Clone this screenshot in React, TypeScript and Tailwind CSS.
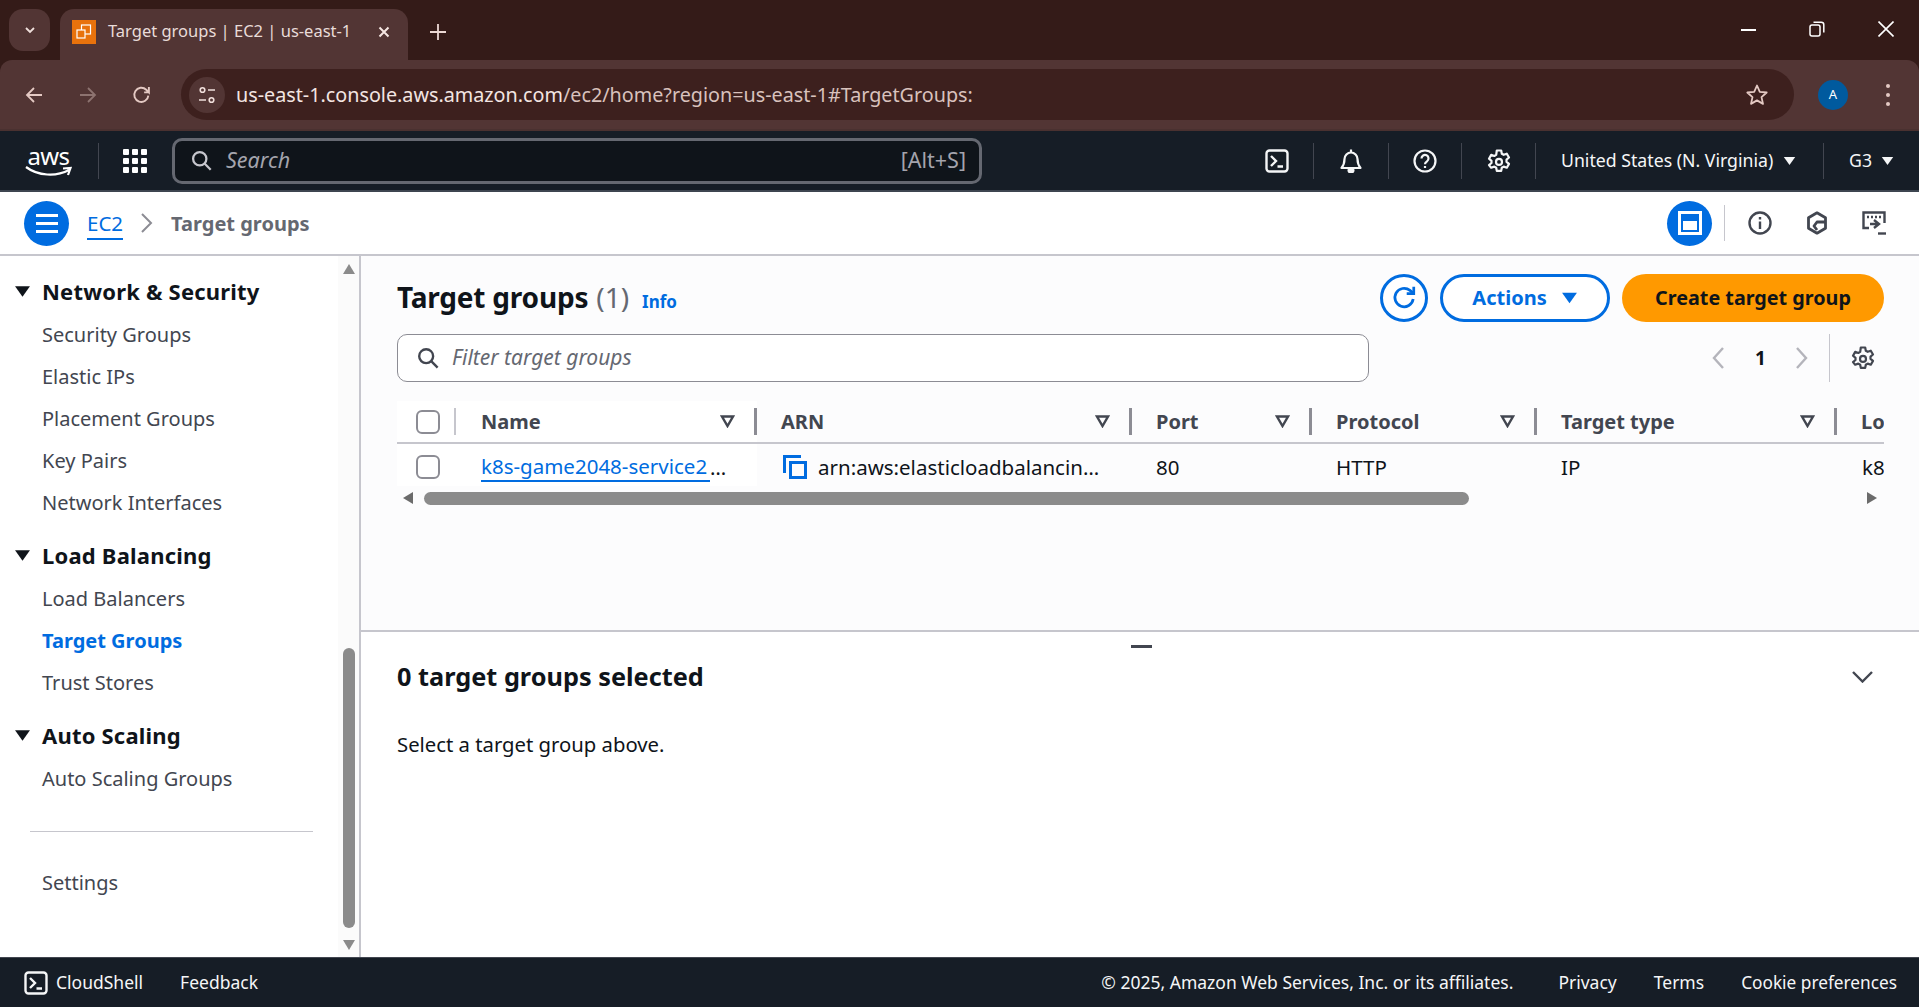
function Tri({ className }: { className: string }) {
  return (
    <svg className={className} viewBox="0 0 16 12" fill="currentColor">
      <path d="M1 1h14L8 11z" />
    </svg>
  );
}

function CloudShellIcon({ className }: { className: string }) {
  return (
    <svg className={className} viewBox="0 0 24 24" fill="none" stroke="currentColor" strokeWidth="2.4">
      <rect x="1.5" y="1.5" width="21" height="21" rx="3" />
      <path d="M6 7l5 5-5 5M12.5 17.5h5.5" />
    </svg>
  );
}

function GearIcon({ className }: { className: string }) {
  return (
    <svg className={className} viewBox="0 0 24 24" fill="none" stroke="currentColor" strokeWidth="2.2" strokeLinejoin="round">
      <path d="M9.8 1.5h4.4l.6 3.2 1.9 1.1 3.1-1.1 2.2 3.8-2.5 2.1v2.2l2.5 2.1-2.2 3.8-3.1-1.1-1.9 1.1-.6 3.2H9.8l-.6-3.2-1.9-1.1-3.1 1.1L2 16.1l2.5-2.1v-2.2L2 9.7l2.2-3.8 3.1 1.1 1.9-1.1z" />
      <circle cx="12" cy="12.9" r="3" />
    </svg>
  );
}

function SearchIcon({ className }: { className: string }) {
  return (
    <svg className={className} viewBox="0 0 24 24" fill="none" stroke="currentColor" strokeWidth="2.6">
      <circle cx="10" cy="10" r="7.6" />
      <path d="M15.5 15.5l7 7" />
    </svg>
  );
}

function Sep({ className }: { className: string }) {
  return <div className={`w-px shrink-0 ${className}`} />;
}

function TabBar() {
  return (
    <div className="h-[60px] bg-[#341b18] flex items-end shrink-0">
      <div className="ml-[9px] mb-[9px] w-[41px] h-[42px] rounded-[14px] bg-[#523534] flex items-center justify-center">
        <svg className="w-3 h-3 text-[#f0e0dc]" viewBox="0 0 12 12" fill="none" stroke="currentColor" strokeWidth="1.8">
          <path d="M2 4l4 4 4-4" />
        </svg>
      </div>
      <div className="ml-[10px] w-[348px] h-[51px] bg-[#523534] rounded-t-[14px] flex items-center pl-3 pb-[6px]">
        <svg className="w-6 h-6 shrink-0" viewBox="0 0 24 24">
          <rect width="24" height="24" fill="#e8720c" />
          <g fill="none" stroke="#fff" strokeWidth="1.2">
            <rect x="9.5" y="5" width="9" height="9" />
            <rect x="5" y="10" width="8" height="8" fill="#e8720c" />
          </g>
        </svg>
        <span className="ml-3 text-[16.5px] leading-none text-[#e9dcd9] whitespace-nowrap w-[270px]">Target groups | EC2 | us-east-1</span>
        <svg className="w-3 h-3 text-[#f5e6e2]" viewBox="0 0 12 12" fill="none" stroke="currentColor" strokeWidth="2">
          <path d="M1.5 1.5l9 9M10.5 1.5l-9 9" />
        </svg>
      </div>
      <div className="ml-[22px] mb-[20px] w-[16px] h-[16px]">
        <svg className="w-4 h-4 text-[#ecd9d4]" viewBox="0 0 16 16" fill="none" stroke="currentColor" strokeWidth="1.8">
          <path d="M8 0v16M0 8h16" />
        </svg>
      </div>
      <div className="flex-1" />
      <div className="flex items-center self-start mt-[21px] text-white mr-[25px]">
        <div className="w-[15px] h-[2px] bg-white mt-[1px]" />
        <svg className="ml-[53px] w-4 h-4" viewBox="0 0 16 16" fill="none" stroke="currentColor" strokeWidth="1.5">
          <rect x="1" y="4" width="10" height="11" rx="2" />
          <path d="M4.5 1.2h7.8a2.5 2.5 0 0 1 2.5 2.5v7.8" />
        </svg>
        <svg className="ml-[53px] w-4 h-4" viewBox="0 0 16 16" fill="none" stroke="currentColor" strokeWidth="1.6">
          <path d="M.5.5l15 15M15.5.5l-15 15" />
        </svg>
      </div>
    </div>
  );
}

function AddressBar() {
  return (
    <div className="h-[71px] bg-[#523534] rounded-t-[12px] flex items-center shrink-0 border-b-2 border-[#4a3130] text-[#e4c9c3]">
      <svg className="ml-[25px] w-[18px] h-[18px]" viewBox="0 0 18 18" fill="none" stroke="currentColor" strokeWidth="1.8">
        <path d="M17 9H2M9 2L2 9l7 7" />
      </svg>
      <svg className="ml-[36px] w-[18px] h-[18px] text-[#8d7370]" viewBox="0 0 18 18" fill="none" stroke="currentColor" strokeWidth="1.8">
        <path d="M1 9h15M9 2l7 7-7 7" />
      </svg>
      <svg className="ml-[35px] w-[19px] h-[19px]" viewBox="0 0 18 18" fill="none" stroke="currentColor" strokeWidth="1.8">
        <path d="M15.5 10a6.7 6.7 0 1 1-2-5.5L16 7V2M16 7h-4.5" />
      </svg>
      <div className="ml-[30px] w-[1613px] h-[51px] rounded-full bg-[#3d201e] flex items-center pl-2 pr-[25px]">
        <div className="w-[36px] h-[36px] rounded-full bg-[#523534] flex items-center justify-center">
          <svg className="w-5 h-5 text-[#f0dfdb]" viewBox="0 0 20 20" fill="none" stroke="currentColor" strokeWidth="1.6">
            <circle cx="5.5" cy="5" r="2.3" />
            <path d="M11 5h7M2 15h7" />
            <circle cx="14.5" cy="15" r="2.3" />
          </svg>
        </div>
        <span className="ml-[11px] text-[19.75px] text-[#f3e5e2] flex-1 whitespace-nowrap">
          us-east-1.console.aws.amazon.com<span className="text-[#d9c2bd]">/ec2/home?region=us-east-1#TargetGroups:</span>
        </span>
        <svg className="w-6 h-6" viewBox="0 0 24 24" fill="none" stroke="currentColor" strokeWidth="1.8" strokeLinejoin="round">
          <path d="M12 2.5l2.8 6.3 6.9.7-5.2 4.6 1.5 6.8L12 17.4l-6 3.500 1.500-6.800-5.200-4.600 6.900-.7z" />
        </svg>
      </div>
      <div className="ml-[24px] w-[30px] h-[30px] rounded-full bg-[#005a9e] flex items-center justify-center text-[13px] text-white">A</div>
      <div className="ml-[38px] flex flex-col gap-[5px]">
        <div className="w-[4px] h-[4px] rounded-full bg-[#e4c9c3]" />
        <div className="w-[4px] h-[4px] rounded-full bg-[#e4c9c3]" />
        <div className="w-[4px] h-[4px] rounded-full bg-[#e4c9c3]" />
      </div>
    </div>
  );
}

function TopNav() {
  return (
    <div className="h-[61px] bg-[#161d26] flex items-center shrink-0 border-b-2 border-[#3d4550] text-[#f5f6f7]">
      <div className="ml-[25px] w-[47px] h-[32px] relative flex flex-col items-center">
        <span className="text-[24px] leading-[22px] font-normal text-white tracking-tight">aws</span>
        <svg className="absolute left-0 bottom-0 w-[47px] h-[12px]" viewBox="0 0 47 12" fill="none" stroke="#fff" strokeWidth="2.2">
          <path d="M1 2c12 9 30 10 43 3M38 3.5l7.5-.5-2.5 7" />
        </svg>
      </div>
      <Sep className="ml-[26px] h-[36px] bg-[#424650]" />
      <div className="ml-[24px] grid grid-cols-3 gap-[3px] w-[24px]">
        {Array.from({ length: 9 }).map((_, i) => (
          <div key={i} className="w-[6px] h-[6px] rounded-[1px] bg-white" />
        ))}
      </div>
      <div className="ml-[25px] w-[810px] h-[46px] bg-[#0f141a] border-[3px] border-[#656871] rounded-[10px] flex items-center pl-4 pr-[13px]">
        <SearchIcon className="w-[21px] h-[21px] text-[#c6c6cd]" />
        <span className="ml-[14px] italic text-[21.5px] text-[#a4a4ad] flex-1">Search</span>
        <span className="text-[21.5px] text-[#a4a4ad]">[Alt+S]</span>
      </div>
      <CloudShellIcon className="ml-[283px] w-6 h-6" />
      <Sep className="ml-[24px] h-[36px] bg-[#424650]" />
      <svg className="ml-[25px] w-6 h-6" viewBox="0 0 24 24" fill="none" stroke="currentColor" strokeWidth="2.2" strokeLinejoin="round">
        <path d="M2.5 19c2-2.5 3-5 3-9a6.5 6.5 0 0 1 13 0c0 4 1 6.5 3 9z" />
        <path d="M9.5 21h5a2.5 2.5 0 0 1-5 0z" fill="currentColor" />
        <path d="M12 .5v3" />
      </svg>
      <Sep className="ml-[25px] h-[36px] bg-[#424650]" />
      <svg className="ml-[24px] w-6 h-6" viewBox="0 0 24 24" fill="none" stroke="currentColor" strokeWidth="2.2">
        <circle cx="12" cy="12" r="10.5" />
        <path d="M8.5 9.5a3.5 3.5 0 1 1 5.5 2.8c-1.3.9-2 1.500-2 3" />
        <path d="M12 17v2" />
      </svg>
      <Sep className="ml-[24px] h-[36px] bg-[#424650]" />
      <GearIcon className="ml-[25px] w-6 h-6" />
      <Sep className="ml-[24px] h-[36px] bg-[#424650]" />
      <span className="ml-[25px] text-[17.7px] whitespace-nowrap w-[212px]">United States (N. Virginia)</span>
      <Tri className="ml-[10px] w-[13px] h-[10px]" />
      <Sep className="ml-[27px] h-[36px] bg-[#424650]" />
      <span className="ml-[25px] text-[17.7px]">G3</span>
      <Tri className="ml-[9px] w-[13px] h-[10px]" />
    </div>
  );
}

function Breadcrumbs() {
  return (
    <div className="h-[64px] bg-white border-b-2 border-[#c6c6cd] flex items-center shrink-0">
      <div className="ml-6 w-[45px] h-[45px] rounded-full bg-[#006ce0] flex flex-col items-center justify-center gap-[5px]">
        <div className="w-[22px] h-[3px] bg-white" />
        <div className="w-[22px] h-[3px] bg-white" />
        <div className="w-[22px] h-[3px] bg-white" />
      </div>
      <span className="ml-[18px] mt-px text-[20.5px] leading-[30px] text-[#006ce0] border-b-2 border-[#006ce0]">EC2</span>
      <svg className="ml-[17px] w-[14px] h-[20px] text-[#8c8c94]" viewBox="0 0 14 20" fill="none" stroke="currentColor" strokeWidth="2">
        <path d="M2 1l9 9-9 9" />
      </svg>
      <span className="ml-[17px] mt-px text-[20px] font-bold text-[#656871]">Target groups</span>
      <div className="flex-1" />
      <div className="w-[45px] h-[45px] rounded-full bg-[#006ce0] flex items-center justify-center">
        <div className="w-[24px] h-[24px] border-[3px] border-white flex items-end p-[2px]">
          <div className="w-full h-[9px] bg-white" />
        </div>
      </div>
      <Sep className="ml-[12px] h-[36px] bg-[#c6c6cd]" />
      <svg className="ml-[23px] w-6 h-6 text-[#424650]" viewBox="0 0 24 24" fill="none" stroke="currentColor" strokeWidth="2.4">
        <circle cx="12" cy="12" r="10.5" />
        <path d="M12 10.5V18M12 6v2.5" />
      </svg>
      <svg className="ml-[33px] w-6 h-6 text-[#424650]" viewBox="0 0 24 24" fill="none" stroke="currentColor" strokeWidth="2.8" strokeLinejoin="round">
        <path d="M12 1.8l8.5 5v10.400L12 22.200l-8.500-5V6.800z" />
        <path d="M20 11h-8l-3 4 3 4" />
      </svg>
      <svg className="ml-[33px] mr-[33px] w-6 h-6 text-[#424650]" viewBox="0 0 24 24" fill="none" stroke="currentColor" strokeWidth="2.4">
        <path d="M7 17H1.5V1.5h21V12" />
        <path d="M5 6h2M9 6h2M13 6h2M17 6h2" />
        <path d="M8 13h8M12 9l5 4-5 4" />
        <path d="M16 22.5h8" />
      </svg>
    </div>
  );
}

function NavGroup({ title, items, active }: { title: string; items: string[]; active?: string }) {
  return (
    <div className="mb-[11px]">
      <div className="h-[42px] mb-px pb-px flex items-center">
        <Tri className="ml-[14px] w-[17px] h-[13px] text-[#0f141a]" />
        <span className="ml-[11px] text-[22px] font-bold text-[#0f141a] tracking-[0.2px]">{title}</span>
      </div>
      {items.map(item => (
        <div
          key={item}
          className={`ml-[42px] h-[42px] flex items-center text-[20px] ${
            item === active ? "font-bold text-[#006ce0]" : "text-[#424650]"
          }`}
        >
          {item}
        </div>
      ))}
    </div>
  );
}

function Sidebar() {
  return (
    <div className="w-[361px] shrink-0 bg-white border-r-2 border-[#c6c6cd] flex">
      <div className="w-[338px] pt-[15px]">
        <NavGroup
          title="Network & Security"
          items={["Security Groups", "Elastic IPs", "Placement Groups", "Key Pairs", "Network Interfaces"]}
        />
        <NavGroup title="Load Balancing" items={["Load Balancers", "Target Groups", "Trust Stores"]} active="Target Groups" />
        <NavGroup title="Auto Scaling" items={["Auto Scaling Groups"]} />
        <div className="ml-[30px] mt-[31px] w-[283px] h-px bg-[#c6c6cd]" />
        <div className="ml-[42px] mt-[36px] text-[20px] text-[#424650]">Settings</div>
      </div>
      <div className="w-[21px] bg-[#fbfbfb] flex flex-col items-center pt-[7px] pb-[6px]">
        <svg className="w-[14px] h-[12px] text-[#8b8b8b]" viewBox="0 0 14 12" fill="currentColor">
          <path d="M7 1l6 10H1z" />
        </svg>
        <div className="flex-1" />
        <div className="w-[12px] h-[280px] rounded-full bg-[#8b8b8b]" />
        <svg className="mt-[11px] w-[14px] h-[12px] text-[#8b8b8b]" viewBox="0 0 14 12" fill="currentColor">
          <path d="M1 1h12L7 11z" />
        </svg>
      </div>
    </div>
  );
}

function HeaderCell({ label, width, first }: { label: string; width: string; first?: boolean }) {
  return (
    <div className={`flex items-center shrink-0 h-full ${width} ${first ? "bg-white" : ""}`}>
      <span className="ml-[24px] mt-px text-[20px] font-bold text-[#424650]">{label}</span>
      <div className="flex-1" />
      <svg className="w-[15px] h-[13px] text-[#424650] mr-[19px]" viewBox="0 0 15 13" fill="none" stroke="currentColor" strokeWidth="2.4">
        <path d="M2 1.5h11L7.5 11z" />
      </svg>
      <div className="w-[3px] h-[27px] bg-[#8c8c94]" />
    </div>
  );
}

function Checkbox() {
  return <div className="ml-[19px] w-[24px] h-[24px] rounded-[6px] border-2 border-[#8c8c94] bg-white" />;
}

function TableSection() {
  return (
    <div className="mt-[19px] mr-[35px] overflow-hidden">
      <div className="h-[43px] flex items-center border-b-2 border-[#c6c6cd] whitespace-nowrap">
        <div className="w-[60px] h-full bg-white flex items-center shrink-0">
          <Checkbox />
          <div className="ml-[14px] w-[2px] h-[27px] bg-[#c6c6cd]" />
        </div>
        <HeaderCell label="Name" width="w-[300px]" first />
        <HeaderCell label="ARN" width="w-[375px]" />
        <HeaderCell label="Port" width="w-[180px]" />
        <HeaderCell label="Protocol" width="w-[225px]" />
        <HeaderCell label="Target type" width="w-[300px]" />
        <span className="ml-[24px] mt-px text-[20px] font-bold text-[#424650]">Lo</span>
      </div>
      <div className="h-[42px] flex items-center whitespace-nowrap text-[20.5px] text-[#0f141a]">
        <div className="w-[360px] h-full bg-white flex items-center shrink-0 pt-[4px]">
          <Checkbox />
          <span className="ml-[41px] text-[#006ce0] w-[229px] overflow-hidden border-b-2 border-[#006ce0] leading-[27px]">k8s-game2048-service2</span>
          <span className="text-[#0f141a] tracking-[3px]">…</span>
        </div>
        <div className="w-[374px] shrink-0 flex items-center pt-[4px]">
          <svg className="ml-[26px] w-6 h-6 text-[#006ce0]" viewBox="0 0 24 24" fill="none" stroke="currentColor" strokeWidth="3">
            <path d="M1.5 18V1.5H18" />
            <rect x="7.5" y="7.5" width="15" height="15" />
          </svg>
          <span className="ml-[11px]">arn:aws:elasticloadbalancin…</span>
        </div>
        <div className="w-[180px] shrink-0 pl-[25px] pt-[4px]">80</div>
        <div className="w-[225px] shrink-0 pl-[25px] pt-[4px]">HTTP</div>
        <div className="w-[301px] shrink-0 pl-[25px] pt-[4px]">IP</div>
        <div className="pl-[25px] pt-[4px]">k8</div>
      </div>
      <div className="h-[14px] mt-[5px] flex items-center">
        <svg className="ml-[5px] w-[12px] h-[14px] text-[#6b6b6b]" viewBox="0 0 12 14" fill="currentColor">
          <path d="M11 1v12L1 7z" />
        </svg>
        <div className="ml-[10px] w-[1045px] h-[13px] rounded-full bg-[#8b8b8b]" />
        <div className="flex-1" />
        <svg className="mr-[6px] w-[12px] h-[14px] text-[#6b6b6b]" viewBox="0 0 12 14" fill="currentColor">
          <path d="M1 1v12l10-6z" />
        </svg>
      </div>
    </div>
  );
}

function MainPanel() {
  return (
    <div className="flex-1 flex flex-col min-w-0 bg-white">
      <div className="h-[376px] bg-[#fcfcfd] border-b-2 border-[#c6c6cd] pl-[36px] pt-[18px]">
        <div className="flex items-center mr-[35px] h-[48px]">
          <span className="text-[28px] font-bold text-[#0f141a] tracking-[-0.2px] mb-[2px]">Target groups</span>
          <span className="ml-2 text-[28px] text-[#656871] mb-[2px]">(1)</span>
          <span className="ml-[13px] mt-[8px] text-[17px] font-bold text-[#006ce0]">Info</span>
          <div className="flex-1" />
          <div className="w-[48px] h-[48px] rounded-full border-[3px] border-[#006ce0] bg-white flex items-center justify-center">
            <svg className="w-[26px] h-[26px] text-[#006ce0]" viewBox="0 0 24 24" fill="none" stroke="currentColor" strokeWidth="2.5">
              <path d="M20.5 13a8.5 8.5 0 1 1-3-8l3 2.5" />
              <path d="M21 1.5V8h-6.5" />
            </svg>
          </div>
          <div className="ml-[12px] w-[170px] h-[48px] rounded-full border-[3px] border-[#006ce0] bg-white flex items-center justify-center">
            <span className="text-[20px] font-bold text-[#006ce0]">Actions</span>
            <Tri className="ml-[14px] w-[17px] h-[14px] text-[#006ce0]" />
          </div>
          <div className="ml-[12px] w-[262px] h-[48px] rounded-full bg-[#ff9900] flex items-center justify-center">
            <span className="text-[19.75px] font-bold text-[#0f141a]">Create target group</span>
          </div>
        </div>
        <div className="mt-[12px] mr-[35px] flex items-center h-[48px]">
          <div className="w-[972px] h-full bg-white rounded-[10px] border border-[#8c8c94] flex items-center pl-[19px]">
            <SearchIcon className="w-[22px] h-[22px] text-[#424650]" />
            <span className="ml-[13px] italic text-[21px] text-[#656871]">Filter target groups</span>
          </div>
          <svg className="ml-[342px] w-[14px] h-[24px] text-[#b4b4bb]" viewBox="0 0 14 24" fill="none" stroke="currentColor" strokeWidth="2.4">
            <path d="M12 2L3 12l9 10" />
          </svg>
          <span className="ml-[30px] text-[19px] font-bold text-[#0f141a]">1</span>
          <svg className="ml-[29px] w-[14px] h-[24px] text-[#b4b4bb]" viewBox="0 0 14 24" fill="none" stroke="currentColor" strokeWidth="2.4">
            <path d="M2 2l9 10-9 10" />
          </svg>
          <Sep className="ml-[20px] h-full bg-[#c6c6cd]" />
          <GearIcon className="ml-[21px] w-6 h-6 text-[#424650]" />
        </div>
        <TableSection />
      </div>
      <div className="flex-1 pl-[36px] relative">
        <div className="absolute left-[770px] top-[13px] w-[21px] h-[3px] bg-[#424650]" />
        <div className="mt-[27px] mr-[46px] h-[36px] flex items-center justify-between">
          <span className="text-[25.3px] font-bold text-[#0f141a]">0 target groups selected</span>
          <svg className="w-[21px] h-[12px] text-[#424650]" viewBox="0 0 21 12" fill="none" stroke="currentColor" strokeWidth="2.4">
            <path d="M1 1l9.5 9.5L20 1" />
          </svg>
        </div>
        <div className="mt-[34px] text-[20.3px] text-[#0f141a]">Select a target group above.</div>
      </div>
    </div>
  );
}

function Footer() {
  return (
    <div className="h-[50px] bg-[#161d26] border-t border-[#424650] flex items-center shrink-0 text-[17.5px] text-[#f5f6f7] whitespace-nowrap">
      <CloudShellIcon className="ml-[24px] w-6 h-6" />
      <span className="ml-[8px]">CloudShell</span>
      <span className="ml-[37px]">Feedback</span>
      <div className="flex-1" />
      <span>© 2025, Amazon Web Services, Inc. or its affiliates.</span>
      <span className="ml-[45px]">Privacy</span>
      <span className="ml-[37px]">Terms</span>
      <span className="ml-[37px] mr-[22px] text-[17.25px]">Cookie preferences</span>
    </div>
  );
}

export default function App() {
  return (
    <div className="w-[1919px] h-[1007px] overflow-hidden flex flex-col font-['Noto_Sans',sans-serif] bg-[#341b18]">
      <TabBar />
      <AddressBar />
      <TopNav />
      <Breadcrumbs />
      <div className="flex-1 flex min-h-0">
        <Sidebar />
        <MainPanel />
      </div>
      <Footer />
    </div>
  );
}
